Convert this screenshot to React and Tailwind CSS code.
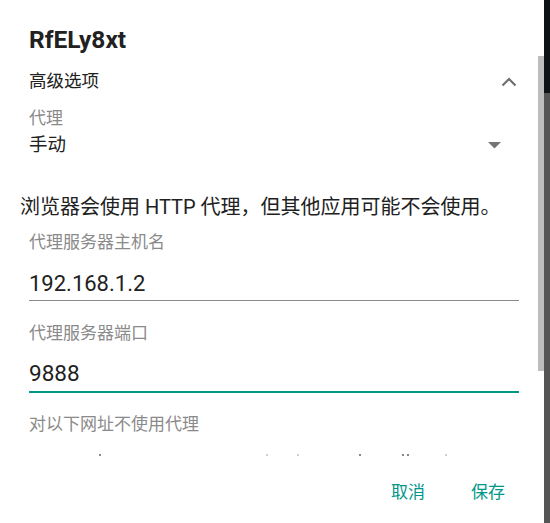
const FONT = { fontFamily: 'Roboto, "Noto Sans CJK SC", sans-serif' }

function ChevronUp() {
  return (
    <svg width="16" height="10" viewBox="0 0 16 10" fill="none">
      <path d="M1.5 8.5 L8 2 L14.5 8.5" stroke="#6f6f6f" strokeWidth="2.2" />
    </svg>
  )
}

function Caret() {
  return (
    <svg width="13" height="7" viewBox="0 0 13 7">
      <path d="M0 0 H13 L6.5 6.5 Z" fill="#757575" />
    </svg>
  )
}

function ClippedRow() {
  // tops of a text line clipped by the scroll area
  const marks = [
    { x: 99, w: 2, c: '#8a8a8a' },
    { x: 266, w: 2, c: '#d0d0d0' },
    { x: 297, w: 2, c: '#d0d0d0' },
    { x: 359, w: 2, c: '#8a8a8a' },
    { x: 402, w: 2, c: '#8a8a8a' },
    { x: 407, w: 2, c: '#8a8a8a' },
    { x: 445, w: 2, c: '#d0d0d0' },
  ]
  return (
    <svg width="538" height="2" className="block">
      {marks.map((m, i) => (
        <rect key={i} x={m.x} y="0" width={m.w} height="2" fill={m.c} />
      ))}
    </svg>
  )
}

export default function App() {
  return (
    <div className="w-[550px] h-[523px] bg-white flex overflow-hidden" style={FONT}>
      <div className="w-[538px] flex flex-col">
        <div className="mt-[22px] h-[36px] leading-[36px] pl-[29px] text-[24.5px] font-bold text-[#212121]">
          RfELy8xt
        </div>

        <div className="mt-[12px] h-[23px] flex items-center justify-between pl-[29px] pr-[21px]">
          <span className="text-[17.5px] leading-[23px] text-[#212121]">高级选项</span>
          <ChevronUp />
        </div>

        <div className="mt-[15px] h-[20px] leading-[20px] pl-[29px] text-[17px] text-[#8a8a8a]">代理</div>

        <div className="mt-[6px] h-[23px] flex items-center justify-between pl-[29px] pr-[37px]">
          <span className="text-[18.5px] leading-[23px] text-[#212121]">手动</span>
          <Caret />
        </div>

        <div className="mt-[38px] h-[24px] leading-[24px] pl-[20px] text-[20px] text-[#212121]">
          浏览器会使用 HTTP 代理，但其他应用可能不会使用。
        </div>

        <div className="mt-[12px] h-[23px] leading-[23px] pl-[29px] text-[17px] text-[#8a8a8a]">代理服务器主机名</div>

        <div className="mt-[16px] ml-[29px] mr-[19px] flex flex-col">
          <div className="h-[27px] leading-[27px] text-[22px] text-[#212121]">192.168.1.2</div>
          <div className="mt-[3px] h-px bg-[#8a8a8a]" />
        </div>

        <div className="mt-[20px] h-[24px] leading-[24px] pl-[29px] text-[17px] text-[#8a8a8a]">代理服务器端口</div>

        <div className="mt-[15px] ml-[29px] mr-[19px] flex flex-col">
          <div className="h-[27px] leading-[27px] text-[22.5px] text-[#212121]">9888</div>
          <div className="mt-[4px] h-[2px] bg-[#009688]" />
        </div>

        <div className="mt-[20px] h-[23px] leading-[23px] pl-[29px] text-[17px] text-[#8a8a8a]">对以下网址不使用代理</div>

        <div className="mt-[18px]">
          <ClippedRow />
        </div>

        <div className="mt-[24px] h-[24px] flex items-center justify-end gap-[46px] pr-[33px]">
          <span className="text-[17px] leading-[24px] text-[#009688]">取消</span>
          <span className="text-[17px] leading-[24px] text-[#009688]">保存</span>
        </div>
      </div>

      <div className="w-[6px] flex flex-col">
        <div className="mt-[56px] h-[315px] bg-[#bdbdbd]" />
      </div>

      <div className="w-[6px] flex flex-col">
        <div className="h-[93px] bg-[#0e1316]" />
        <div className="flex-1 bg-[#555555]" />
      </div>
    </div>
  )
}
